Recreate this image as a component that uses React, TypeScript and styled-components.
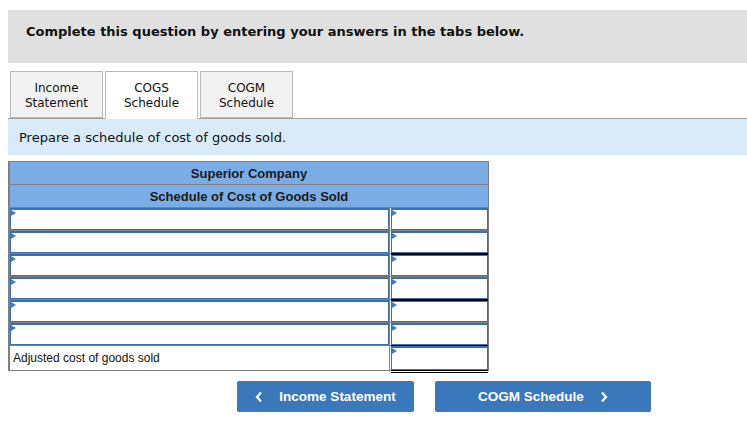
import React from "react";
import styled, { createGlobalStyle } from "styled-components";

const GlobalStyle = createGlobalStyle`
  html, body {
    margin: 0;
    padding: 0;
    background: #ffffff;
  }
  body {
    font-family: "DejaVu Sans", Verdana, sans-serif;
    color: #111;
  }
`;

const Page = styled.div`
  padding: 10px 0 0 8px;
`;

const Banner = styled.div`
  height: 53px;
  box-sizing: border-box;
  background: #e0e0e0;
  padding: 14px 0 0 18px;
  font-weight: bold;
  font-size: 13px;
  line-height: 16px;
  color: #111;
`;

const TabBar = styled.div`
  display: flex;
  gap: 2px;
  margin-top: 8px;
  padding-left: 2px;
  height: 47px;
`;

const Tab = styled.div<{ $active?: boolean }>`
  width: 93px;
  height: ${(p) => (p.$active ? "48px" : "47px")};
  box-sizing: border-box;
  border: 1px solid #b8b8b8;
  border-bottom: ${(p) => (p.$active ? "1px solid #ffffff" : "1px solid #b8b8b8")};
  background: ${(p) => (p.$active ? "#ffffff" : "#f2f2f2")};
  display: flex;
  align-items: flex-start;
  justify-content: center;
  padding-top: 9px;
  text-align: center;
  font-size: 12px;
  line-height: 15px;
  color: #111;
  position: relative;
  z-index: ${(p) => (p.$active ? 2 : 1)};
`;

const Instruction = styled.div`
  border-top: 1px solid #a0a0a0;
  background: #d9ebf9;
  height: 36px;
  display: flex;
  align-items: center;
  padding-left: 11px;
  font-size: 13px;
  color: #111;
`;

const Schedule = styled.div`
  margin-top: 6px;
  width: 481px;
  box-sizing: border-box;
  border: 1px solid #7f7f7f;
  border-left-width: 2px;
  font-family: "Liberation Sans", Arial, sans-serif;
`;

const HeadRow = styled.div`
  height: 23px;
  box-sizing: border-box;
  background: #7aade5;
  border-bottom: 1px solid #7f7f7f;
  display: flex;
  align-items: center;
  justify-content: center;
  font-weight: bold;
  font-size: 13px;
  color: #1a1a1a;
`;

const Row = styled.div<{ $tall?: boolean }>`
  display: grid;
  grid-template-columns: 379px 1fr;
  height: ${(p) => (p.$tall ? "24px" : "23px")};
  box-sizing: border-box;
  border-bottom: 1px solid #7f7f7f;
  &:last-child {
    border-bottom: none;
  }
`;

const Cell = styled.div<{ $right?: boolean }>`
  position: relative;
  box-sizing: border-box;
  border-left: ${(p) => (p.$right ? "1px solid #7f7f7f" : "none")};
  padding: ${(p) => (p.$right ? "0 0 0 1px" : "0")};
  display: flex;
  align-items: stretch;
`;

const Field = styled.div<{ $total?: "single" | "double" }>`
  flex: 1;
  position: relative;
  box-sizing: border-box;
  border: 1px solid #3b6fb0;
  border-top-width: 2px;
  background: #fff;
  box-shadow: ${(p) =>
    p.$total === "single"
      ? "0 2px 0 #000"
      : p.$total === "double"
      ? "0 1px 0 #000, 0 2px 0 #fff, 0 3px 0 #000"
      : "none"};
  z-index: ${(p) => (p.$total ? 1 : 0)};
`;

const Marker = styled.span`
  position: absolute;
  top: 0;
  left: 0;
  width: 0;
  height: 0;
  border-top: 3px solid transparent;
  border-bottom: 3px solid transparent;
  border-left: 5px solid #3d7cc9;
`;

const Label = styled.div`
  display: flex;
  align-items: center;
  padding-left: 3px;
  font-size: 12px;
  color: #111;
`;

const NavRow = styled.div`
  display: flex;
  gap: 21px;
  margin-top: 10px;
  padding-left: 229px;
`;

const NavButton = styled.button<{ $w: number }>`
  width: ${(p) => p.$w}px;
  height: 31px;
  border: none;
  border-radius: 2px;
  background: #3b77bb;
  color: #fff;
  font-family: "Liberation Sans", Arial, sans-serif;
  font-weight: bold;
  font-size: 13.5px;
  display: flex;
  align-items: center;
  justify-content: center;
  gap: 16px;
  padding: 0;
`;

const Chevron = ({ dir }: { dir: "left" | "right" }) => (
  <svg width="8" height="12" viewBox="0 0 8 12">
    <polyline
      points={dir === "left" ? "6,1.5 2,6 6,10.5" : "2,1.5 6,6 2,10.5"}
      fill="none"
      stroke="#fff"
      strokeWidth="2.2"
    />
  </svg>
);

const ROWS: Array<"single" | undefined> = [
  undefined,
  "single",
  undefined,
  "single",
  undefined,
  "single",
];

export default function App() {
  return (
    <>
      <GlobalStyle />
      <Page>
        <Banner>Complete this question by entering your answers in the tabs below.</Banner>
        <TabBar>
          <Tab>
            Income
            <br />
            Statement
          </Tab>
          <Tab $active>
            COGS
            <br />
            Schedule
          </Tab>
          <Tab>
            COGM
            <br />
            Schedule
          </Tab>
        </TabBar>
        <Instruction>Prepare a schedule of cost of goods sold.</Instruction>
        <Schedule>
          <HeadRow>Superior Company</HeadRow>
          <HeadRow>Schedule of Cost of Goods Sold</HeadRow>
          {ROWS.map((total, i) => (
            <Row key={i}>
              <Cell>
                <Field>
                  <Marker />
                </Field>
              </Cell>
              <Cell $right>
                <Field $total={total}>
                  <Marker />
                </Field>
              </Cell>
            </Row>
          ))}
          <Row $tall>
            <Label>Adjusted cost of goods sold</Label>
            <Cell $right>
              <Field $total="double">
                <Marker />
              </Field>
            </Cell>
          </Row>
        </Schedule>
        <NavRow>
          <NavButton $w={177}>
            <Chevron dir="left" />
            Income Statement
          </NavButton>
          <NavButton $w={216}>
            COGM Schedule
            <Chevron dir="right" />
          </NavButton>
        </NavRow>
      </Page>
    </>
  );
}
